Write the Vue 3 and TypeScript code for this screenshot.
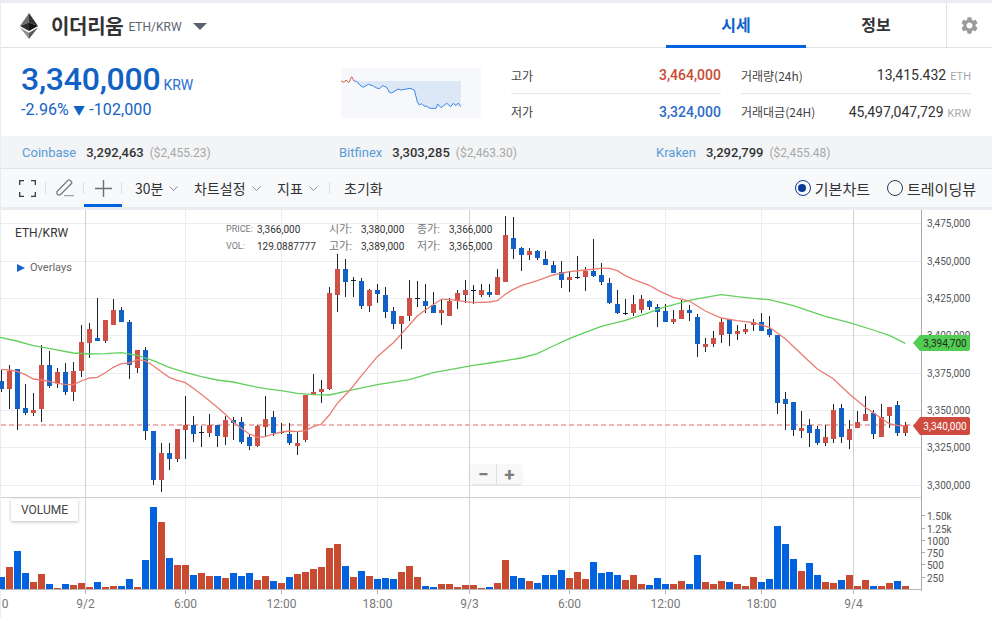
<script setup lang="ts">
type Candle = [string, number, number, number, number]

const z3: Candle[] = [
  ['b',480,545,513,537],['r',465,596,483,537],['b',477,659,477,597],['b',522,614,594,609],['r',549,618,600,609],
  ['r',405,636,465,597],['b',424,533,465,528],['r',475,534,486,519],['b',460,554,486,546],['r',455,572,483,546],
  ['r',346,500,396,483],['r',340,444,357,399],['b',265,393,384,393],['r',330,400,330,393],['r',267,345,300,345],
  ['b',291,336,300,336],['b',331,506,336,465],['r',420,488,420,474],['b',411,689,420,663],['b',663,824,663,810],
  ['r',700,845,729,810],['b',700,779,729,747],['r',657,755,657,747],['r',559,746,645,660],['b',618,695,645,672],
  ['d',649,710,666,669],['r',613,680,645,669],['b',645,710,645,678],['r',618,704,630,681],['b',620,690,630,639],
  ['b',622,702,636,696],['b',673,719,681,708],['r',645,710,648,708],['r',559,680,627,651],['b',603,677,621,669],
  ['d',640,672,666,669],['b',640,706,672,699],['r',667,734,699,708],['r',555,695,555,690],['r',493,555,546,555],
  ['r',510,580,537,546],['r',230,540,249,537],
  ['r',133,307,177,255],['b',148,260,177,216],['d',201,260,210,213],['b',205,298,213,288],['r',238,305,240,288],
  ['b',223,278,240,252],['b',232,325,255,306],['b',292,358,303,342],['r',318,418,318,342],['r',211,332,264,318],
  ['d',214,290,264,267],['b',222,308,273,288],['b',246,310,285,309],['r',268,345,300,309],['r',264,318,273,318],
  ['r',240,296,249,273],['r',211,278,240,255],['d',225,282,240,243],['r',222,260,240,255],['b',222,262,246,255],
  ['r',178,255,201,255],['r',18,216,75,216],['b',21,147,84,117],['b',112,182,114,135],['r',114,150,123,135],
  ['b',120,150,123,144],['b',124,165,147,165],['b',152,190,165,189],['b',152,234,186,210],['r',185,245,201,210],
  ['d',139,207,201,204],['r',172,242,183,201],['b',88,200,183,198],['b',160,225,195,216],['b',205,282,219,279],
  ['b',241,312,282,309],['d',268,315,309,312],['r',256,318,282,309],['r',256,309,267,300],['b',271,300,273,291],
  ['b',282,352,291,306],
  ['b',282,336,303,336],['r',300,342,327,336],['r',270,327,300,327],['b',285,332,300,309],['b',312,442,321,402],
  ['r',385,425,402,411],['r',364,410,384,402],['r',323,400,336,375],['b',327,407,327,372],['r',346,390,363,372],
  ['r',342,372,357,366],['r',328,362,336,345],['b',310,362,336,363],['b',318,380,357,375],['b',375,613,375,579],
  ['b',547,661,567,582],['b',576,677,576,660],['r',604,685,654,663],['b',628,710,645,669],['b',648,706,657,699],
  ['r',645,707,681,699],['r',582,698,600,687],['b',582,698,594,681],['r',630,716,657,690],['r',604,654,636,654],
  ['r',558,633,612,633],['b',600,686,609,672],['r',582,681,621,681],['r',591,654,591,618],['b',573,677,585,669],
  ['r',636,677,645,669]
]

const pxY = (z: number): number => 210 + Math.round(z / 3)
const candles = z3.map((c, k) => ({
  kind: c[0],
  wickX: 8 * k + 1,
  bodyX: 8 * k - 1,
  wt: pxY(c[1]),
  wh: pxY(c[2]) - pxY(c[1]),
  bt: pxY(c[3]),
  bh: Math.max(1, pxY(c[4]) - pxY(c[3]))
}))

const volTops: [string, number][] = [
  ['b',261],['r',231],['b',183],['b',249],['r',276],['r',252],['b',282],['r',294],['b',282],['r',285],
  ['r',279],['r',291],['b',276],['r',291],['r',288],['b',288],['b',267],['r',291],['b',210],['b',51],
  ['r',96],['b',204],['r',225],['r',225],['b',255],['r',249],['r',258],['b',258],['r',264],['b',249],
  ['b',258],['b',249],['r',270],['r',258],['b',273],['r',279],['b',261],['r',252],['r',246],['r',237],
  ['r',231],['r',174],['r',162],['b',228],['r',261],['b',243],['r',258],['b',267],['b',264],['b',267],
  ['r',246],['r',228],['r',261],['b',288],['b',291],['r',282],['r',282],['r',291],['r',285],['r',285],
  ['r',294],['b',291],['r',279],['r',210],['b',258],['b',264],['r',273],['b',279],['b',255],['b',255],
  ['b',240],['r',264],['r',246],['r',267],['b',216],['b',249],['b',246],['b',255],['r',270],['r',255],
  ['r',282],['b',285],['b',264],['b',282],['r',282],['r',273],['b',282],['b',195],['r',276],['r',282],
  ['r',273],['b',276],['r',282],['r',288],['r',261],['b',276],['b',267],['b',108],['b',162],['b',207],
  ['r',243],['b',219],['b',255],['r',276],['r',279],['b',270],['r',255],['r',288],['r',270],['b',288],
  ['r',288],['r',279],['b',273],['r',288]
]
const bars = volTops.map((v, k) => {
  const top = 490 + Math.round(v[1] / 3)
  return { kind: v[0], x: 8 * k - 2, y: top, h: 589 - top }
})

const line = (off: number, pts: number[][]): string =>
  pts.map(p => `${(off + p[0] / 3).toFixed(1)},${(210 + p[1] / 3).toFixed(1)}`).join(' ')

const redLine = [
  line(0, [[4,478],[28,480],[52,484],[76,494],[100,507],[124,510],[148,514],[172,520],[196,523],[220,524],[244,513],[268,504],[292,502],[316,488],[340,472],[364,461],[388,459],[412,449],[436,452],[460,467],[484,485],[508,502],[532,511],[556,518],[580,535],[604,553],[628,572],[652,592],[676,613],[700,636],[724,655],[748,672],[772,682],[796,680],[820,672],[844,666],[868,663],[892,665],[916,662],[940,650],[964,642],[988,615]]),
  line(330, [[22,580],[60,540],[100,490],[142,440],[190,398],[214,372],[238,345],[262,318],[286,300],[334,268],[358,268],[382,272],[430,278],[478,276],[502,272],[526,253],[550,238],[574,227],[622,212],[670,195],[718,185],[766,180],[814,175],[838,175],[862,182],[886,197],[910,208],[958,226],[990,244]]),
  line(660, [[40,262],[88,273],[136,303],[184,324],[232,332],[280,338],[328,352],[376,386],[424,432],[472,477],[520,506],[568,552],[616,592],[664,625],[688,641],[712,646],[736,648]])
].join(' ')

const greenLine = [
  line(0, [[0,382],[50,393],[100,407],[150,416],[220,429],[268,432],[316,431],[364,428],[412,436],[460,452],[508,472],[556,487],[604,500],[652,510],[700,516],[748,527],[796,536],[844,542],[892,550],[940,554],[988,555]]),
  line(330, [[60,541],[142,524],[238,509],[310,488],[430,466],[500,456],[574,444],[622,431],[670,408],[718,386],[766,367],[814,349],[886,331],[958,308],[990,295]]),
  line(660, [[88,271],[136,262],[184,254],[232,260],[280,265],[328,269],[400,287],[496,319],[568,338],[640,360],[688,376],[736,400]])
].join(' ')

const gridY = [223, 261, 298, 335, 373, 410, 447, 485]
const minorX = [185, 281, 377, 569, 665, 761]
const majorX = [85, 469, 853]
const priceLabels = [
  { t: '3,475,000', y: 227 }, { t: '3,450,000', y: 265 }, { t: '3,425,000', y: 302 },
  { t: '3,400,000', y: 339 }, { t: '3,375,000', y: 377 }, { t: '3,350,000', y: 414 },
  { t: '3,325,000', y: 451 }, { t: '3,300,000', y: 489 }
]
const volLabels = [
  { t: '1.50k', y: 516 }, { t: '1.25k', y: 529 }, { t: '1000', y: 541 },
  { t: '750', y: 553 }, { t: '500', y: 565 }, { t: '250', y: 578 }
]
const timeLabels = [
  { t: '0', x: 5 }, { t: '9/2', x: 85.5 }, { t: '6:00', x: 185.5 }, { t: '12:00', x: 281.5 }, { t: '18:00', x: 377.5 },
  { t: '9/3', x: 469.5 }, { t: '6:00', x: 569.5 }, { t: '12:00', x: 665.5 }, { t: '18:00', x: 761.5 }, { t: '9/4', x: 853.5 }
]

const sparkPts: number[][] = [[33,63],[42,67],[48,60],[56,68],[65,50],[72,63],[80,64],[90,76],[100,82],[115,73],[130,78],[140,84],[148,86],[158,77],[170,82],[178,97],[185,99],[205,87],[212,90],[225,88],[240,85],[253,90],[262,125],[268,135],[275,131],[282,138],[290,139],[300,145],[318,145],[323,132],[333,143],[350,130],[362,140],[370,130],[378,137],[385,129],[392,140]]
const sp = (p: number[]): string => `${((p[0] - 33) / 3).toFixed(1)},${((p[1] - 24) / 3).toFixed(1)}`
const sparkRed = sparkPts.slice(0, 6).map(sp).join(' ')
const sparkBlue = sparkPts.slice(5).map(sp).join(' ')
const sparkArea = `13,13 ${sparkPts.slice(6).map(sp).join(' ')} 120,13`

const exchanges = [
  { name: 'Coinbase', price: '3,292,463', usd: '($2,455.23)' },
  { name: 'Bitfinex', price: '3,303,285', usd: '($2,463.30)' },
  { name: 'Kraken', price: '3,292,799', usd: '($2,455.48)' }
]
const menus = [
  { t: '30분', w: 59 },
  { t: '차트설정', w: 83 },
  { t: '지표', w: 54 }
]
</script>

<template>
  <div class="page">
    <header class="topbar">
      <div class="coin">
        <svg class="eth" width="18" height="26" viewBox="0 0 18 26">
          <polygon points="9,0 0,13 9,9.4" fill="#6f6f72" />
          <polygon points="9,0 18,13 9,9.4" fill="#343436" />
          <polygon points="9,9.4 0,13 9,18" fill="#2e2e30" />
          <polygon points="9,9.4 18,13 9,18" fill="#141416" />
          <polygon points="0,14.6 9,26 9,19.8" fill="#909093" />
          <polygon points="18,14.6 9,26 9,19.8" fill="#5a5a5d" />
        </svg>
        <span class="coin-name">이더리움</span>
        <span class="coin-pair">ETH/KRW</span>
        <span class="caret"></span>
      </div>
      <nav class="tabs">
        <a class="tab active">시세</a>
        <a class="tab">정보</a>
      </nav>
      <div class="gear">
        <svg width="17" height="17" viewBox="2 2 20 20" fill="#9b9b9b">
          <path d="M19.14 12.94c.04-.3.06-.61.06-.94 0-.32-.02-.64-.07-.94l2.03-1.58a.49.49 0 0 0 .12-.61l-1.92-3.32a.488.488 0 0 0-.59-.22l-2.39.96c-.5-.38-1.03-.7-1.62-.94l-.36-2.54a.484.484 0 0 0-.48-.41h-3.84c-.24 0-.43.17-.47.41l-.36 2.54c-.59.24-1.13.57-1.62.94l-2.39-.96c-.22-.08-.47 0-.59.22L2.74 8.87c-.12.21-.08.47.12.61l2.03 1.58c-.05.3-.09.63-.09.94s.02.64.07.94l-2.03 1.58a.49.49 0 0 0-.12.61l1.92 3.32c.12.22.37.29.59.22l2.39-.96c.5.38 1.03.7 1.62.94l.36 2.54c.05.24.24.41.48.41h3.84c.24 0 .44-.17.47-.41l.36-2.54c.59-.24 1.13-.56 1.62-.94l2.39.96c.22.08.47 0 .59-.22l1.92-3.32c.12-.22.07-.47-.12-.61l-2.01-1.58zM12 15.6c-1.98 0-3.6-1.62-3.6-3.6s1.62-3.6 3.6-3.6 3.6 1.62 3.6 3.6-1.62 3.6-3.6 3.6z" />
        </svg>
      </div>
    </header>

    <section class="summary">
      <div class="price-box">
        <div class="price-line"><span class="price">3,340,000</span><span class="price-unit">KRW</span></div>
        <div class="change">-2.96% <span class="down">▼</span> -102,000</div>
      </div>
      <svg class="spark" width="140" height="50" viewBox="0 0 140 50">
        <rect width="140" height="50" fill="#f6f8fc" />
        <polygon :points="sparkArea" fill="#dde8f6" />
        <polyline :points="sparkRed" fill="none" stroke="#d9604f" stroke-width="1" />
        <polyline :points="sparkBlue" fill="none" stroke="#3a86e6" stroke-width="1" />
      </svg>
      <div class="stats">
        <div class="stat line"><span class="stat-label">고가</span><span class="stat-value high">3,464,000</span></div>
        <div class="stat line"><span class="stat-label">거래량(24h)</span><span class="stat-num">13,415.432<small>ETH</small></span></div>
        <div class="stat low-row"><span class="stat-label">저가</span><span class="stat-value low">3,324,000</span></div>
        <div class="stat low-row"><span class="stat-label">거래대금(24H)</span><span class="stat-num">45,497,047,729<small>KRW</small></span></div>
      </div>
    </section>

    <section class="exchanges">
      <div v-for="e in exchanges" :key="e.name" class="exchange">
        <span class="ex-name">{{ e.name }}</span>
        <span class="ex-price">{{ e.price }}</span>
        <span class="ex-usd">{{ e.usd }}</span>
      </div>
    </section>

    <section class="toolbar">
      <div class="tool sep">
        <svg width="17" height="17" viewBox="0 0 17 17" fill="none" stroke="#333a45" stroke-width="1.3">
          <path d="M.7 5V.7H5M12 .7h4.3V5M16.3 12v4.3H12M5 16.3H.7V12" />
        </svg>
      </div>
      <div class="tool sep">
        <svg width="20" height="20" viewBox="0 0 20 20" fill="none" stroke="#6a7078" stroke-width="1.2">
          <path d="M2 16.5v-3L13.2 2.2a1.2 1.2 0 0 1 1.7 0l1.6 1.6a1.2 1.2 0 0 1 0 1.7L5.2 16.8H2.3" />
          <path d="M9 17.6h10" stroke="#9aa0a8" />
        </svg>
      </div>
      <div class="tool sep on">
        <svg width="17" height="17" viewBox="0 0 17 17" fill="none" stroke="#6a7078" stroke-width="1.4">
          <path d="M8.5 0v17M0 8.5h17" />
        </svg>
      </div>
      <div class="menus">
        <div v-for="m in menus" :key="m.t" class="menu" :style="{ width: m.w + 'px' }">
          <span>{{ m.t }}</span>
          <svg class="chev" width="9" height="5" viewBox="0 0 9 5" fill="none" stroke="#8b9097" stroke-width="1">
            <path d="M.5.5l4 4 4-4" />
          </svg>
        </div>
      </div>
      <span class="reset">초기화</span>
      <div class="radios">
        <label class="radio"><i class="dot checked"></i>기본차트</label>
        <label class="radio"><i class="dot"></i>트레이딩뷰</label>
      </div>
    </section>

    <section class="chart">
      <svg class="plot" width="992" height="408" viewBox="0 210 992 408">
        <rect x="0" y="210" width="1" height="408" fill="#e9edf2" />
        <g shape-rendering="crispEdges">
          <rect v-for="y in gridY" :key="'g' + y" x="1" :y="y" width="920" height="1" fill="#ebedf0" />
          <rect v-for="x in minorX" :key="'m' + x" :x="x" y="210" width="1" height="379" fill="#ebedf0" />
          <rect v-for="x in majorX" :key="'M' + x" :x="x" y="210" width="1" height="379" fill="#d0d1d3" />
          <rect v-for="x in [...minorX, ...majorX]" :key="'t' + x" :x="x" y="590" width="1" height="4" fill="#b5b7ba" />
          <rect x="1" y="497" width="920" height="1" fill="#cfd0d2" />
          <rect x="921" y="210" width="1" height="381" fill="#a6a8ab" />
          <rect x="1" y="589" width="920" height="1" fill="#b5b7ba" />
          <rect v-for="l in volLabels" :key="'vt' + l.t" x="922" :y="l.y - 1" width="3" height="1" fill="#a6a8ab" />
        </g>
        <line class="last-price" x1="1" y1="425" x2="915" y2="425" />
        <g shape-rendering="crispEdges">
          <g v-for="c in candles" :key="c.wickX">
            <rect :x="c.wickX" :y="c.wt" width="1" :height="c.wh" fill="#1c2430" />
            <rect :x="c.bodyX" :y="c.bt" width="5" :height="c.bh"
              :fill="c.kind === 'r' ? '#cd5146' : c.kind === 'b' ? '#1161c6' : '#1c2430'" />
          </g>
          <rect v-for="b in bars" :key="'v' + b.x" :x="b.x" :y="b.y" width="7" :height="b.h"
            :fill="b.kind === 'r' ? '#c84a31' : '#0062df'" />
        </g>
        <polyline :points="greenLine" fill="none" stroke="#63cf5d" stroke-width="1.3" />
        <polyline :points="redLine" fill="none" stroke="#ea7d72" stroke-width="1.3" />
        <text v-for="l in priceLabels" :key="l.t" x="927" :y="l.y" class="axis-text">{{ l.t }}</text>
        <text v-for="l in volLabels" :key="l.t" x="927" :y="l.y + 4" class="axis-text">{{ l.t }}</text>
        <text v-for="l in timeLabels" :key="l.t + l.x" :x="l.x" y="608" class="time-text">{{ l.t }}</text>
      </svg>

      <div class="pair-title">ETH/KRW</div>
      <div class="overlays"><i class="tri"></i>Overlays</div>
      <div class="legend">
        <span class="lg-key">PRICE:</span><span class="lg-val">3,366,000</span>
        <span class="lg-key ko">시가:</span><span class="lg-val">3,380,000</span>
        <span class="lg-key ko">종가:</span><span class="lg-val">3,366,000</span>
        <span class="lg-key">VOL:</span><span class="lg-val">129.0887777</span>
        <span class="lg-key ko">고가:</span><span class="lg-val">3,389,000</span>
        <span class="lg-key ko">저가:</span><span class="lg-val">3,365,000</span>
      </div>
      <div class="zoom-ctl">
        <span class="zoom-btn">−</span><span class="zoom-btn plus">+</span>
      </div>
      <div class="vol-tag">VOLUME</div>
      <div class="tag green">3,394,700</div>
      <div class="tag red">3,340,000</div>
    </section>
  </div>
</template>

<style scoped>
.page {
  width: 992px;
  height: 618px;
  box-sizing: border-box;
  padding-top: 3px;
  background: #e9edf2;
  display: flex;
  flex-direction: column;
  overflow: hidden;
  font-family: Roboto, "Noto Sans CJK KR", sans-serif;
  color: #333;
}
.topbar {
  height: 45px;
  box-sizing: border-box;
  margin-left: 1px;
  background: #fff;
  border-bottom: 1px solid #dfe2e6;
  display: flex;
  align-items: stretch;
}
.coin {
  flex: 1;
  display: flex;
  align-items: center;
  padding-left: 19px;
}
.eth { margin-right: 13px; margin-top: 1px; }
.coin-name {
  font: 700 20px "Noto Sans CJK KR", sans-serif;
  color: #333;
  letter-spacing: -0.3px;
}
.coin-pair {
  font-size: 12px;
  color: #5a6472;
  margin-left: 5px;
  margin-top: 3px;
}
.caret {
  width: 0;
  height: 0;
  border-left: 7px solid transparent;
  border-right: 7px solid transparent;
  border-top: 7px solid #5a6270;
  margin-left: 11px;
  margin-top: 3px;
}
.tabs { display: flex; }
.tab {
  width: 140px;
  display: flex;
  align-items: center;
  justify-content: center;
  font: 700 16px "Noto Sans CJK KR", sans-serif;
  color: #333;
  margin-bottom: -1px;
  padding-bottom: 3px;
  box-sizing: border-box;
}
.tab.active {
  color: #0f62c8;
  border-bottom: 3px solid #0062df;
  padding-bottom: 0;
}
.gear {
  width: 45px;
  border-left: 1px solid #dfe2e6;
  display: flex;
  align-items: center;
  justify-content: center;
}
.summary {
  height: 88px;
  margin-left: 1px;
  background: #fff;
  display: flex;
  align-items: flex-start;
}
.price-box { width: 340px; box-sizing: border-box; padding: 12px 0 0 20px; }
.price-line { display: flex; align-items: baseline; height: 38px; }
.price { font-size: 32px; font-weight: 500; color: #1261c4; letter-spacing: -0.25px; }
.price-unit { font-size: 14px; color: #1f6fd0; margin-left: 3px; }
.change { font-size: 16px; color: #1261c4; margin-top: 2px; letter-spacing: 0.1px; }
.down { font-size: 12px; }
.spark { margin-top: 20px; display: block; }
.stats {
  margin: 9px 0 0 30px;
  display: grid;
  grid-template-columns: 210px 230px;
  column-gap: 20px;
  grid-auto-rows: 37px;
}
.stat {
  display: flex;
  align-items: center;
  justify-content: space-between;
  box-sizing: border-box;
  height: 37px;
}
.stat.line { border-bottom: 1px solid #e4e6e9; }
.stat.low-row { padding-bottom: 2px; }
.stat-label { font: 400 12px "Noto Sans CJK KR", sans-serif; color: #444; }
.stat-value { font-size: 14px; font-weight: 500; }
.high { color: #c84a31; }
.low { color: #2a6bc8; }
.stat-num { font-size: 14px; color: #333; }
.stat-num small { font-size: 11px; color: #a8a8a8; margin-left: 4px; }
.exchanges {
  height: 33px;
  box-sizing: border-box;
  margin-left: 1px;
  background: #f2f4f6;
  border-bottom: 1px solid #dfe2e6;
  display: grid;
  grid-template-columns: repeat(3, 317px);
  align-items: center;
  padding-left: 21px;
}
.exchange { font-size: 13px; display: flex; align-items: baseline; }
.ex-name { color: #5a9bd8; margin-right: 10px; }
.ex-price { font-weight: 500; color: #333; margin-right: 6px; }
.ex-usd { color: #a8a8a8; font-size: 12px; }
.toolbar {
  height: 38px;
  margin-left: 1px;
  background: #f8f9fb;
  display: flex;
  align-items: center;
  padding-left: 7px;
}
.tool {
  width: 38px;
  height: 38px;
  box-sizing: border-box;
  display: flex;
  align-items: center;
  justify-content: center;
  position: relative;
}
.tool.sep::after {
  content: "";
  position: absolute;
  right: 0;
  top: 13px;
  height: 12px;
  width: 1px;
  background: #dcdfe3;
}
.tool.on { border-bottom: 3px solid #0062df; padding-top: 3px; }
.menus { display: flex; margin-left: 13px; height: 38px; position: relative; }
.menus::after {
  content: "";
  position: absolute;
  right: 1px;
  top: 13px;
  height: 12px;
  width: 1px;
  background: #dcdfe3;
}
.menu {
  display: flex;
  align-items: center;
  font: 400 14px "Noto Sans CJK KR", Roboto, sans-serif;
  color: #333;
}
.chev { margin-left: 6px; margin-top: 1px; }
.reset {
  font: 400 14px "Noto Sans CJK KR", sans-serif;
  margin-left: 13px;
  color: #333;
}
.radios { margin-left: auto; display: flex; gap: 17px; padding-right: 16px; }
.radio {
  display: flex;
  align-items: center;
  font: 400 15px "Noto Sans CJK KR", sans-serif;
  color: #333;
}
.dot {
  width: 16px;
  height: 16px;
  box-sizing: border-box;
  border: 1.5px solid #2b3a55;
  border-radius: 50%;
  margin-right: 4px;
  display: block;
  position: relative;
}
.dot.checked { border-color: #123a8c; }
.dot.checked::after {
  content: "";
  position: absolute;
  left: 2.5px;
  top: 2.5px;
  width: 8px;
  height: 8px;
  border-radius: 50%;
  background: #0b3a9a;
}
.chart {
  flex: 1;
  margin-top: 3px;
  background: #fff;
  position: relative;
  overflow: hidden;
}
.plot { display: block; }
.last-price { stroke: #efb4af; stroke-width: 2; stroke-dasharray: 5 3; }
.axis-text { font: 400 10px Roboto, sans-serif; fill: #555; }
.time-text { font: 400 12px Roboto, sans-serif; fill: #777; text-anchor: middle; }
.pair-title {
  position: absolute;
  left: 15px;
  top: 16px;
  font-size: 12px;
  color: #333;
}
.overlays {
  position: absolute;
  left: 17px;
  top: 51px;
  font-size: 11px;
  color: #666;
  display: flex;
  align-items: center;
}
.tri {
  width: 0;
  height: 0;
  border-top: 4.5px solid transparent;
  border-bottom: 4.5px solid transparent;
  border-left: 8px solid #1565c8;
  margin-right: 5px;
}
.legend {
  position: absolute;
  left: 226px;
  top: 11px;
  display: grid;
  grid-template-columns: 31px 72px 32px 56px 32px 50px;
  grid-auto-rows: 17px;
  align-items: center;
  font-size: 10px;
  line-height: 1;
  white-space: nowrap;
}
.lg-key { color: #777; font-size: 9px; }
.lg-key.ko { font-size: 11px; }
.lg-val { color: #333; }
.zoom-ctl {
  position: absolute;
  left: 471px;
  top: 254px;
  width: 51px;
  height: 20px;
  background: #f8f8f8;
  border-radius: 3px;
  box-shadow: 0 1px 2px rgba(0, 0, 0, 0.12);
  display: flex;
}
.zoom-btn {
  flex: 1;
  display: flex;
  align-items: center;
  justify-content: center;
  font: 700 19px Roboto, sans-serif;
  color: #7d7d7d;
}
.zoom-btn.plus { border-left: 1px solid #ddd; }
.vol-tag {
  position: absolute;
  left: 11px;
  top: 289px;
  width: 67px;
  height: 22px;
  background: #fff;
  box-shadow: 0 1px 3px rgba(0, 0, 0, 0.25);
  font-size: 12px;
  color: #444;
  display: flex;
  align-items: center;
  justify-content: center;
}
.tag {
  position: absolute;
  left: 920px;
  width: 50px;
  height: 16px;
  font-size: 10px;
  display: flex;
  align-items: center;
  justify-content: center;
  border-radius: 0 2px 2px 0;
}
.tag::before {
  content: "";
  position: absolute;
  left: -7px;
  top: 0;
  width: 0;
  height: 0;
  border-top: 8px solid transparent;
  border-bottom: 8px solid transparent;
}
.tag.green { top: 125px; background: #52cc52; color: #1c2b1c; }
.tag.green::before { border-right: 7px solid #52cc52; }
.tag.red { top: 207px; height: 18px; background: #cf4b40; color: #fff; }
.tag.red::before {
  border-right: 7px solid #cf4b40;
  border-top-width: 9px;
  border-bottom-width: 9px;
}
</style>
